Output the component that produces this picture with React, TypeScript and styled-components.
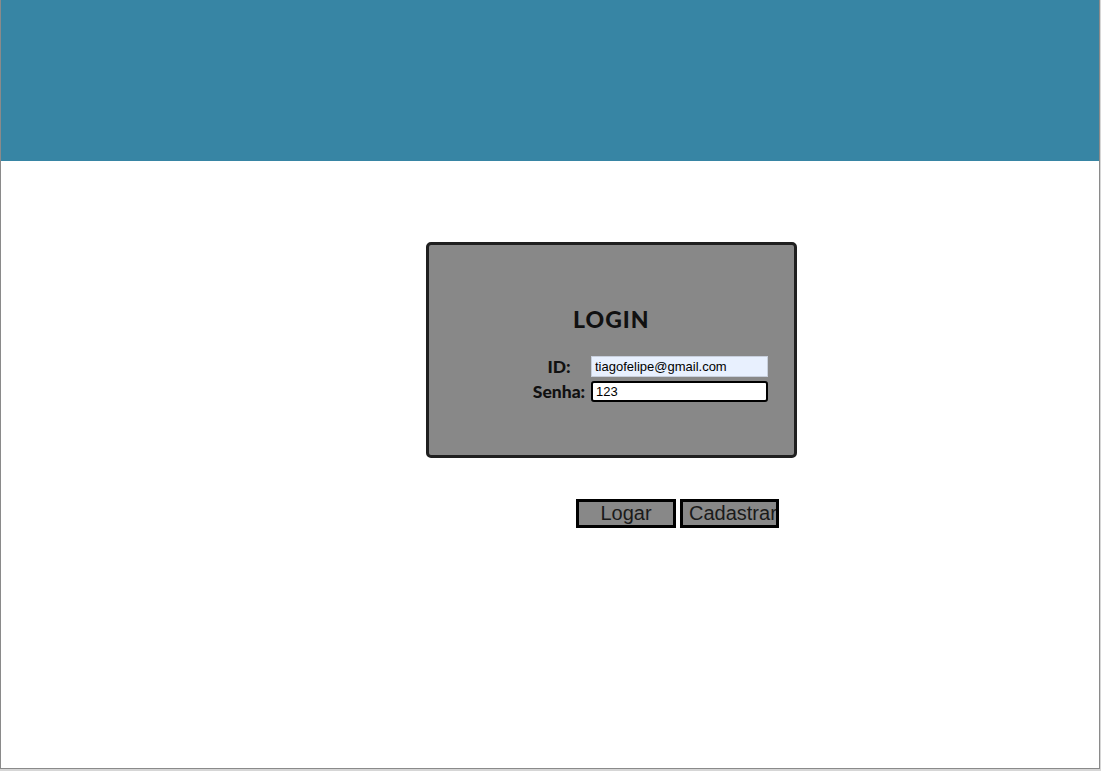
import { createGlobalStyle } from "styled-components";
import styled from "styled-components";

const Global = createGlobalStyle`
  html, body {
    margin: 0;
    padding: 0;
    background: #d6d6d6;
  }
  * {
    box-sizing: border-box;
  }
`;

const Frame = styled.div`
  width: 1100px;
  height: 769px;
  background: #ffffff;
  border-left: 1px solid #8a8a8a;
  border-right: 1px solid #8a8a8a;
  border-bottom: 1px solid #8a8a8a;
  display: flex;
  flex-direction: column;
  overflow: hidden;
`;

const Header = styled.header`
  height: 161px;
  background: #3785a4;
  flex-shrink: 0;
`;

const Main = styled.main`
  display: flex;
  flex-direction: column;
  padding: 81px 0 0 425px;
`;

const Card = styled.div`
  width: 371px;
  height: 216px;
  background: #888888;
  border: 3px solid #1f1f1f;
  border-radius: 5px;
  display: flex;
  flex-direction: column;
  padding-top: 59px;
`;

const Title = styled.h1`
  margin: 0 0 0 144px;
  font-family: "Lato", "Noto Sans", sans-serif;
  font-weight: 900;
  font-size: 23px;
  line-height: 30px;
  color: #111;
  letter-spacing: 1px;
`;

const Form = styled.div`
  display: grid;
  grid-template-columns: 60px 177px;
  column-gap: 2px;
  row-gap: 4px;
  margin: 22px 0 0 100px;
  align-items: center;
`;

const Label = styled.label`
  font-family: "Lato", "Noto Sans", sans-serif;
  font-weight: 900;
  font-size: 17.5px;
  line-height: 20px;
  color: #111;
  text-align: center;
`;

const Input = styled.input<{ $focused?: boolean; $autofill?: boolean }>`
  width: 177px;
  height: 21px;
  padding: 0 3px;
  font-family: "Liberation Sans", Arial, sans-serif;
  font-size: 13px;
  color: #000;
  background: ${(p) => (p.$autofill ? "#e8f0fe" : "#ffffff")};
  border: ${(p) => (p.$focused ? "2px solid #000" : "1px solid #c8cfdc")};
  border-radius: ${(p) => (p.$focused ? "3px" : "0")};
  outline: none;
`;

const Buttons = styled.div`
  display: flex;
  gap: 4px;
  margin: 41px 0 0 150px;
`;

const Button = styled.button`
  width: 100px;
  height: 29px;
  padding: 0 6px;
  background: #888888;
  border: 3px solid #000;
  font-family: "Liberation Sans", Arial, sans-serif;
  font-size: 20px;
  color: #1a1a1a;
  white-space: nowrap;
  overflow: hidden;
  cursor: pointer;
`;

export default function App() {
  return (
    <>
      <Global />
      <Frame>
        <Header />
        <Main>
          <Card>
            <Title>LOGIN</Title>
            <Form>
              <Label>ID:</Label>
              <Input $autofill defaultValue="tiagofelipe@gmail.com" />
              <Label>Senha:</Label>
              <Input $focused defaultValue="123" />
            </Form>
          </Card>
          <Buttons>
            <Button>Logar</Button>
            <Button style={{ width: 99 }}>Cadastrar</Button>
          </Buttons>
        </Main>
      </Frame>
    </>
  );
}
